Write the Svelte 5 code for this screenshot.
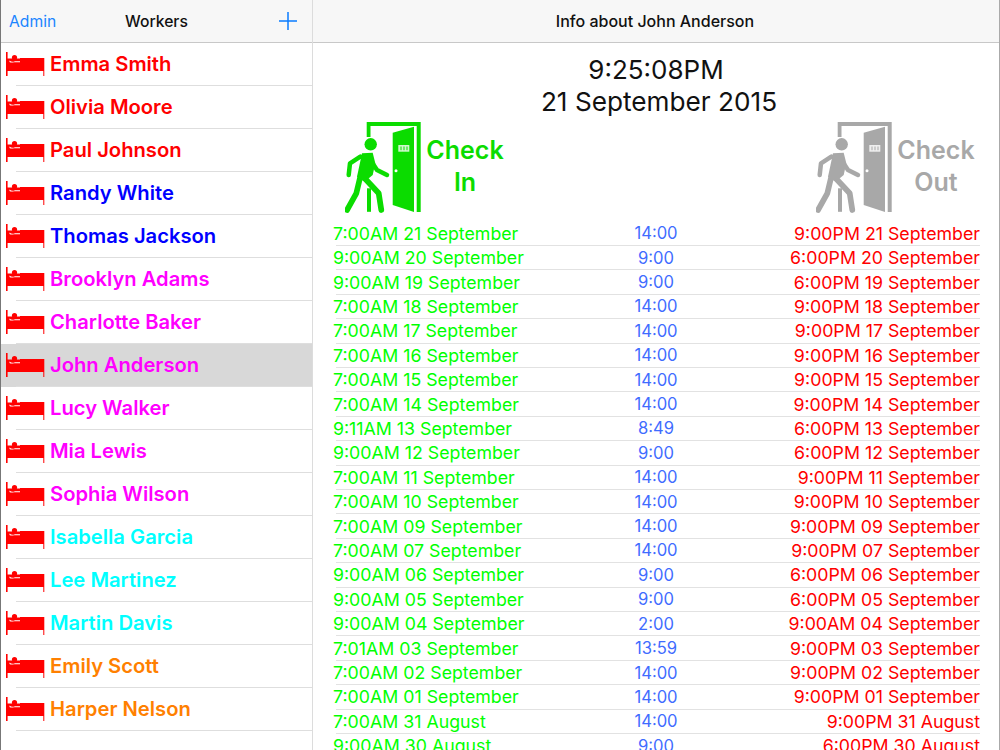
<script lang="ts">
  const workers = [
    { name: 'Emma Smith', color: '#ff0000' },
    { name: 'Olivia Moore', color: '#ff0000' },
    { name: 'Paul Johnson', color: '#ff0000' },
    { name: 'Randy White', color: '#0000ff' },
    { name: 'Thomas Jackson', color: '#0000ff' },
    { name: 'Brooklyn Adams', color: '#ff00ff' },
    { name: 'Charlotte Baker', color: '#ff00ff' },
    { name: 'John Anderson', color: '#ff00ff', selected: true },
    { name: 'Lucy Walker', color: '#ff00ff' },
    { name: 'Mia Lewis', color: '#ff00ff' },
    { name: 'Sophia Wilson', color: '#ff00ff' },
    { name: 'Isabella Garcia', color: '#00ffff' },
    { name: 'Lee Martinez', color: '#00ffff' },
    { name: 'Martin Davis', color: '#00ffff' },
    { name: 'Emily Scott', color: '#ff8000' },
    { name: 'Harper Nelson', color: '#ff8000' }
  ];

  const log = [
    ['7:00AM 21 September', '14:00', '9:00PM 21 September'],
    ['9:00AM 20 September', '9:00', '6:00PM 20 September'],
    ['9:00AM 19 September', '9:00', '6:00PM 19 September'],
    ['7:00AM 18 September', '14:00', '9:00PM 18 September'],
    ['7:00AM 17 September', '14:00', '9:00PM 17 September'],
    ['7:00AM 16 September', '14:00', '9:00PM 16 September'],
    ['7:00AM 15 September', '14:00', '9:00PM 15 September'],
    ['7:00AM 14 September', '14:00', '9:00PM 14 September'],
    ['9:11AM 13 September', '8:49', '6:00PM 13 September'],
    ['9:00AM 12 September', '9:00', '6:00PM 12 September'],
    ['7:00AM 11 September', '14:00', '9:00PM 11 September'],
    ['7:00AM 10 September', '14:00', '9:00PM 10 September'],
    ['7:00AM 09 September', '14:00', '9:00PM 09 September'],
    ['7:00AM 07 September', '14:00', '9:00PM 07 September'],
    ['9:00AM 06 September', '9:00', '6:00PM 06 September'],
    ['9:00AM 05 September', '9:00', '6:00PM 05 September'],
    ['9:00AM 04 September', '2:00', '9:00AM 04 September'],
    ['7:01AM 03 September', '13:59', '9:00PM 03 September'],
    ['7:00AM 02 September', '14:00', '9:00PM 02 September'],
    ['7:00AM 01 September', '14:00', '9:00PM 01 September'],
    ['7:00AM 31 August', '14:00', '9:00PM 31 August'],
    ['9:00AM 30 August', '9:00', '6:00PM 30 August']
  ];
</script>

{#snippet bed()}
  <svg class="bed" viewBox="0 0 40 24" width="40" height="24" aria-hidden="true">
    <path d="M0 0H1.600V6.500H14V6H38.300V24H37.300V19H1.600V24H0Z" fill="#ff0000" />
    <circle cx="8.500" cy="5.500" r="2.600" fill="#ff0000" />
    <path d="M3.500 8.500Q6 10.800 9 9.200H14V10.200H8Q5 11 3.500 10Z" fill="#fff" />
  </svg>
{/snippet}

{#snippet door(color: string)}
  <svg class="door" viewBox="0 0 80 92" width="80" height="92" aria-hidden="true">
    <path d="M21.700 0H75.700V90H71.700V4H25.500V15H21.700Z" fill={color} />
    <path d="M47.700 10.700 69 4.700V90L47.700 83Z" fill={color} />
    <rect x="53.300" y="23" width="11" height="6.700" fill="#fff" opacity="0.8" />
    <path d="M56 24.500v3.700M59 24.500v3.700M62 24.500v3.700" stroke={color} stroke-width="1" />
    <circle cx="51" cy="48.700" r="1.500" fill="#fff" />
    <circle cx="25.700" cy="22.300" r="6.200" fill={color} />
    <path d="M15.300 34.700 5 41.300 3.700 53M28.700 43 32 48 42 53" fill="none" stroke={color} stroke-width="4.500" stroke-linecap="round" stroke-linejoin="round" />
    <path d="M19.700 56.300 33.700 71.300 36.300 88M15.300 54.700 11.300 71.300 2 88" fill="none" stroke={color} stroke-width="5.700" stroke-linecap="round" stroke-linejoin="round" />
    <path d="M17 31.300 27.700 30.700 30.300 41.300 27.700 53 19.700 59.700 12 54.700Z" fill={color} />
    <rect x="22" y="66.300" width="4" height="23.500" fill={color} />
  </svg>
{/snippet}

<div class="screen">
  <aside class="sidebar">
    <header class="nav">
      <span class="admin">Admin</span>
      <span class="nav-title">Workers</span>
      <svg class="plus" viewBox="0 0 18 18" width="18" height="18" aria-hidden="true">
        <path d="M9 0v18M0 9h18" stroke="#0a7cff" stroke-width="1.500" fill="none" />
      </svg>
    </header>
    <ul class="workers">
      {#each workers as worker}
        <li class="worker" class:selected={worker.selected}>
          {@render bed()}
          <span class="worker-name" style="color: {worker.color}">{worker.name}</span>
        </li>
      {/each}
    </ul>
  </aside>

  <main class="detail">
    <header class="nav detail-nav">Info about John Anderson</header>
    <div class="clock">
      <div class="time">9:25:08PM</div>
      <div>21 September 2015</div>
    </div>
    <div class="actions">
      <div class="action in">
        {@render door('#0bdc00')}
        <div class="action-label">Check<br />In</div>
      </div>
      <div class="action out">
        {@render door('#a8a8a8')}
        <div class="action-label">Check<br />Out</div>
      </div>
    </div>
    <div class="log">
      {#each log as [start, hours, end]}
        <div class="log-row">
          <span class="start">{start}</span>
          <span class="hours">{hours}</span>
          <span class="end">{end}</span>
        </div>
      {/each}
    </div>
  </main>
</div>

<style>
  :global(body) {
    margin: 0;
    overflow: hidden;
  }

  .screen {
    display: flex;
    width: 1000px;
    height: 750px;
    overflow: hidden;
    background: #fff;
    font-family: Inter, Roboto, "Liberation Sans", sans-serif;
    box-sizing: border-box;
    border-left: 1px solid #777;
    border-right: 1px solid #aaa;
  }

  .sidebar {
    width: 311px;
    flex: none;
    border-right: 1px solid #dcdcdc;
  }

  .nav {
    height: 43px;
    box-sizing: border-box;
    background: #f7f7f7;
    border-bottom: 1px solid #c8c8c8;
    display: flex;
    align-items: center;
    font-size: 16px;
    font-weight: 500;
    color: #111;
  }

  .sidebar .nav {
    padding: 0 15px 0 8px;
    position: relative;
    justify-content: space-between;
  }

  .admin {
    color: #1a85ff;
    font-size: 15.700px;
    font-weight: 400;
  }

  .nav-title {
    position: absolute;
    left: 124px;
    font-size: 15.700px;
  }

  .workers {
    list-style: none;
    margin: 0;
    padding: 0;
  }

  .worker {
    height: 43px;
    box-sizing: border-box;
    display: flex;
    align-items: center;
    gap: 4px;
    padding: 0 0 1px 5px;
    font-size: 20.200px;
    font-weight: 600;
    position: relative;
  }

  .worker-name {
    padding-bottom: 2px;
  }

  .worker::after {
    content: '';
    position: absolute;
    left: 15px;
    right: 0;
    bottom: 0;
    height: 1px;
    background: #dedede;
  }

  .worker.selected {
    background: #d8d8d8;
  }

  .bed {
    flex: none;
  }

  .detail {
    flex: 1;
    min-width: 0;
  }

  .detail-nav {
    justify-content: center;
    padding-right: 2px;
  }

  .clock {
    text-align: center;
    font-size: 26.200px;
    line-height: 32px;
    color: #111;
    padding: 11px 0 0 6px;
  }

  .time {
    padding-right: 6px;
    font-size: 26px;
  }

  .actions {
    display: flex;
    justify-content: space-between;
    padding: 4px 23px 0 32px;
    height: 92px;
  }

  .action {
    display: flex;
    align-items: flex-start;
  }

  .action-label {
    font-size: 25px;
    font-weight: 600;
    line-height: 32px;
    text-align: center;
    padding: 12px 0 0;
    width: 80px;
  }

  .in .action-label {
    color: #0bdc00;
  }

  .out .action-label {
    color: #a8a8a8;
  }

  .log {
    margin-top: 7.500px;
  }

  .log-row {
    height: 24.420px;
    box-sizing: border-box;
    display: grid;
    grid-template-columns: 1fr 80px 1fr;
    align-items: center;
    font-size: 17.750px;
    margin-left: 23px;
    margin-right: 19px;
    border-bottom: 1px solid #e2e2e2;
    white-space: nowrap;
  }

  .start {
    color: #00ff00;
    margin-left: -3px;
  }

  .hours {
    color: #3f6cff;
    text-align: center;
    font-size: 16.600px;
    padding-right: 4px;
  }

  .end {
    color: #ff0000;
    text-align: right;
  }
</style>
